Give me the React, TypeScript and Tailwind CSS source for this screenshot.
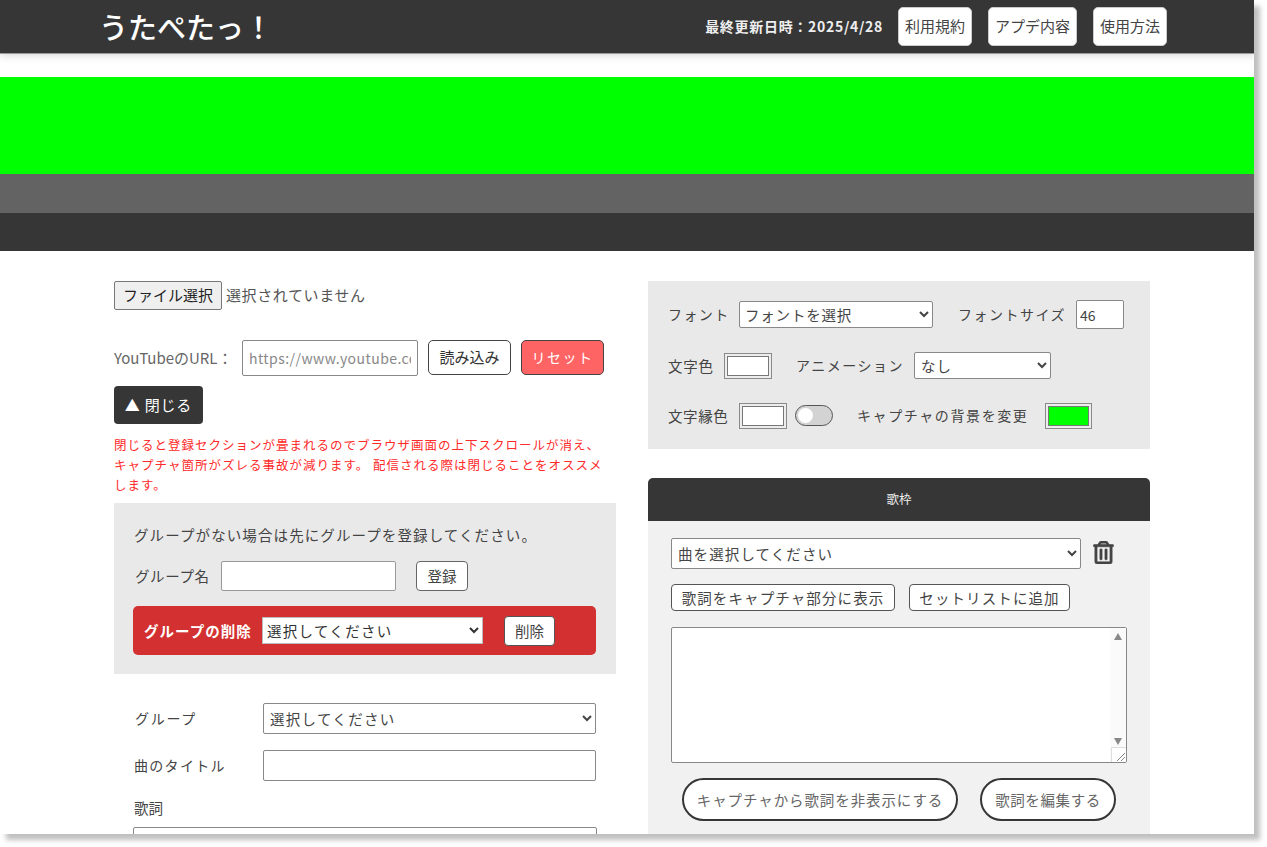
import React from 'react';
import { FaRegTrashAlt } from 'react-icons/fa';

const font = "font-['Noto_Sans_CJK_JP','Noto_Sans',sans-serif]";

function NavButton({ label, width }: { label: string; width: string }) {
  return (
    <button className={`${width} h-[39px] rounded-[5px] bg-white border border-[#ccc] text-[15px] text-[#444]`}>
      {label}
    </button>
  );
}

function Swatch({ color, width = 'w-[48px]' }: { color: string; width?: string }) {
  return (
    <div className={`${width} h-[26px] border border-[#8a8a8a] bg-[#ededed] p-[2px]`}>
      <div className="h-full border border-[#777]" style={{ background: color }} />
    </div>
  );
}

function App() {
  return (
    <div className={`w-[1267px] h-[847px] bg-white overflow-hidden ${font} text-[#444]`}>
      <div className="w-[1254px] h-[834px] bg-white overflow-hidden shadow-[6px_6px_5px_rgba(0,0,0,0.25)]">
        <header className="h-[54px] bg-[#363636] border-b border-[#999] shadow-[0_2px_8px_rgba(0,0,0,0.15)] flex items-center pl-[99px] pr-[87px]">
          <h1 className="text-[29px] leading-none font-medium text-white">うたぺたっ！</h1>
          <div className="ml-auto flex items-center">
            <span className="text-[14px] font-bold text-[#eee] mr-[15px] tracking-[0.7px]">最終更新日時：2025/4/28</span>
            <div className="flex gap-[16px]">
              <NavButton label="利用規約" width="w-[74px]" />
              <NavButton label="アプデ内容" width="w-[89px]" />
              <NavButton label="使用方法" width="w-[74px]" />
            </div>
          </div>
        </header>

        <div className="h-[23px]" />
        <div className="h-[97px] bg-[#00ff00]" />
        <div className="h-[39px] bg-[#636363]" />
        <div className="h-[38px] bg-[#363636]" />

        <main className="flex gap-[32px] pl-[114px] pt-[30px]">
          <section className="w-[502px] shrink-0">
            <div className="flex items-center h-[29px]">
              <button className="w-[108px] h-[29px] border border-[#777] rounded-[2px] bg-[#efefef] text-[15px] text-[#222]">
                ファイル選択
              </button>
              <span className="ml-[4px] text-[15px] text-[#555] tracking-[0.6px]">選択されていません</span>
            </div>

            <div className="flex items-start mt-[30px] h-[36px]">
              <span className="w-[128px] leading-[36px] text-[15px] text-[#666]">YouTubeのURL：</span>
              <input
                className="w-[176px] h-[36px] border border-[#888] rounded-[2px] bg-white px-[6px] text-[14px] tracking-[0.45px] placeholder:text-[#888]"
                placeholder="https://www.youtube.com/watch"
              />
              <button className="ml-[10px] w-[83px] h-[35px] border border-[#444] rounded-[5px] bg-white text-[15px] text-[#333]">
                読み込み
              </button>
              <button className="ml-[10px] w-[83px] h-[35px] border border-[#444] rounded-[5px] bg-[#ff6464] text-[14px] text-white tracking-[1.5px]">
                リセット
              </button>
            </div>

            <button className="block mt-[10px] w-[89px] h-[38px] rounded-[4px] bg-[#363636] text-[15px] text-white tracking-[0.8px]">
              ▲ 閉じる
            </button>

            <p className="mt-[11px] pr-[8px] text-[12.5px] leading-[20px] text-[#ff2a2a] tracking-[1px]">
              閉じると登録セクションが畳まれるのでブラウザ画面の上下スクロールが消え、キャプチャ箇所がズレる事故が減ります。 配信される際は閉じることをオススメします。
            </p>

            <div className="mt-[8px] h-[171px] bg-[#e9e9e9] pt-[21px] px-[20px]">
              <p className="text-[14.5px] leading-[21px] text-[#444] tracking-[1.1px]">
                グループがない場合は先にグループを登録してください。
              </p>
              <div className="flex items-center mt-[16px] ml-px">
                <span className="w-[86px] text-[14.5px] text-[#444] tracking-[0.6px]">グループ名</span>
                <input className="w-[175px] h-[30px] border border-[#999] rounded-[2px] bg-white" />
                <button className="ml-[20px] w-[52px] h-[30px] border border-[#666] rounded-[4px] bg-white text-[14.5px] text-[#444]">
                  登録
                </button>
              </div>
              <div className="flex items-center mt-[15px] -ml-[1px] w-[463px] h-[49px] rounded-[5px] bg-[#d33131] pl-[11px]">
                <span className="w-[118px] text-[14.5px] font-bold text-white tracking-[1px] whitespace-nowrap">グループの削除</span>
                <select className="w-[221px] h-[27px] bg-white border border-[#bbb] text-[14.5px] text-[#333] tracking-[1.3px]">
                  <option>選択してください</option>
                </select>
                <button className="ml-[21px] w-[51px] h-[30px] border border-[#555] rounded-[4px] bg-white text-[14.5px] text-[#444]">
                  削除
                </button>
              </div>
            </div>

            <div className="pl-[20px] pr-[20px] pt-[29px]">
              <div className="flex items-center">
                <span className="w-[129px] pl-px text-[14px] text-[#444] tracking-[1.7px]">グループ</span>
                <select className="w-[333px] h-[31px] border border-[#888] rounded-[2px] bg-white text-[14.5px] text-[#444] tracking-[1.3px] pl-[2px]">
                  <option>選択してください</option>
                </select>
              </div>
              <div className="flex items-center mt-[16px]">
                <span className="w-[129px] text-[14px] text-[#444] tracking-[1.3px]">曲のタイトル</span>
                <input className="w-[333px] h-[31px] border border-[#888] rounded-[2px] bg-white" />
              </div>
              <div className="mt-[16px] text-[14.5px] leading-[21px] text-[#444]">歌詞</div>
              <textarea className="block mt-[9px] -ml-px w-[464px] h-[80px] border border-[#888] rounded-[2px] bg-white" />
            </div>
          </section>

          <section className="w-[502px] shrink-0">
            <div className="h-[168px] bg-[#e9e9e9] pl-[20px] pt-[19px]">
              <div className="flex items-center h-[29px]">
                <span className="w-[71px] text-[14px] tracking-[1.4px] text-[#444]">フォント</span>
                <select className="w-[194px] h-[27px] border border-[#888] rounded-[2px] bg-white text-[14.5px] text-[#444] tracking-[0.8px] pl-[1px]">
                  <option>フォントを選択</option>
                </select>
                <span className="ml-[25px] w-[118px] text-[14px] tracking-[1.5px] text-[#444] whitespace-nowrap">フォントサイズ</span>
                <input
                  className="w-[48px] h-[29px] border border-[#888] rounded-[2px] bg-white px-[3px] text-[14px] text-[#444]"
                  defaultValue="46"
                />
              </div>
              <div className="flex items-center h-[27px] mt-[23px]">
                <span className="w-[56px] text-[14.5px] tracking-[0.7px] text-[#444] whitespace-nowrap">文字色</span>
                <Swatch color="#fff" />
                <span className="ml-[24px] w-[118px] text-[14px] tracking-[1.5px] text-[#444] whitespace-nowrap">アニメーション</span>
                <select className="w-[137px] h-[27px] border border-[#888] rounded-[2px] bg-white text-[14.5px] text-[#444] tracking-[1px] pl-[2px]">
                  <option>なし</option>
                </select>
              </div>
              <div className="flex items-center h-[27px] mt-[23px]">
                <span className="w-[71px] text-[14.5px] tracking-[0.6px] text-[#444] whitespace-nowrap">文字縁色</span>
                <Swatch color="#fff" />
                <div className="ml-[8px] w-[38px] h-[21px] rounded-full bg-[#d3d3d3] border border-[#555] p-[2px]">
                  <div className="w-[15px] h-[15px] rounded-full bg-white" />
                </div>
                <span className="ml-[24px] w-[188px] text-[14px] tracking-[1.6px] text-[#444] whitespace-nowrap">キャプチャの背景を変更</span>
                <Swatch color="#00ff00" width="w-[47px]" />
              </div>
            </div>

            <div className="mt-[29px] h-[43px] rounded-t-[5px] bg-[#363636] flex items-center justify-center text-[12.5px] text-[#eee]">
              歌枠
            </div>
            <div className="h-[400px] bg-[#f1f1f1] pl-[23px] pt-[17px]">
              <div className="flex items-center">
                <select className="w-[410px] h-[31px] border border-[#888] rounded-[2px] bg-white text-[14.5px] text-[#444] tracking-[1.1px] pl-[2px]">
                  <option>曲を選択してください</option>
                </select>
                <FaRegTrashAlt
                  className="ml-[12px] -mt-[3px] w-[21px] h-[23px] text-[#444]"
                  stroke="currentColor"
                  strokeWidth={14}
                />
              </div>
              <div className="flex gap-[14px] mt-[15px]">
                <button className="w-[224px] h-[27px] border border-[#555] rounded-[4px] bg-white text-[14.5px] text-[#444] tracking-[1.1px] whitespace-nowrap">
                  歌詞をキャプチャ部分に表示
                </button>
                <button className="w-[161px] h-[27px] border border-[#555] rounded-[4px] bg-white text-[14.5px] text-[#444] tracking-[1.1px] whitespace-nowrap">
                  セットリストに追加
                </button>
              </div>
              <div className="relative mt-[16px] w-[456px] h-[136px]">
                <textarea className="block w-full h-full border border-[#888] rounded-[2px] bg-white resize-none" />
                <div className="absolute right-px top-px bottom-px w-[16px] bg-[#fafafa] flex flex-col items-center justify-between pt-[5px] pb-[17px]">
                  <div className="w-0 h-0 border-x-[4px] border-x-transparent border-b-[7px] border-b-[#888]" />
                  <div className="w-0 h-0 border-x-[4px] border-x-transparent border-t-[7px] border-t-[#888]" />
                </div>
                <svg className="absolute right-px bottom-px w-[15px] h-[15px] bg-white" viewBox="0 0 15 15">
                  <path d="M14 6 6 14M14 10l-4 4" stroke="#888" strokeWidth="1" fill="none" />
                  <path d="M0.5 15V0.5H15" stroke="#ddd" fill="none" />
                </svg>
              </div>
              <div className="flex gap-[22px] mt-[15px] ml-[11px]">
                <button className="w-[276px] h-[43px] border-2 border-[#363636] rounded-full bg-white text-[14.5px] text-[#666] tracking-[0.9px]">
                  キャプチャから歌詞を非表示にする
                </button>
                <button className="w-[136px] h-[43px] border-2 border-[#363636] rounded-full bg-white text-[14.5px] text-[#666] tracking-[0.6px]">
                  歌詞を編集する
                </button>
              </div>
            </div>
          </section>
        </main>
      </div>
    </div>
  );
}

export default App;
